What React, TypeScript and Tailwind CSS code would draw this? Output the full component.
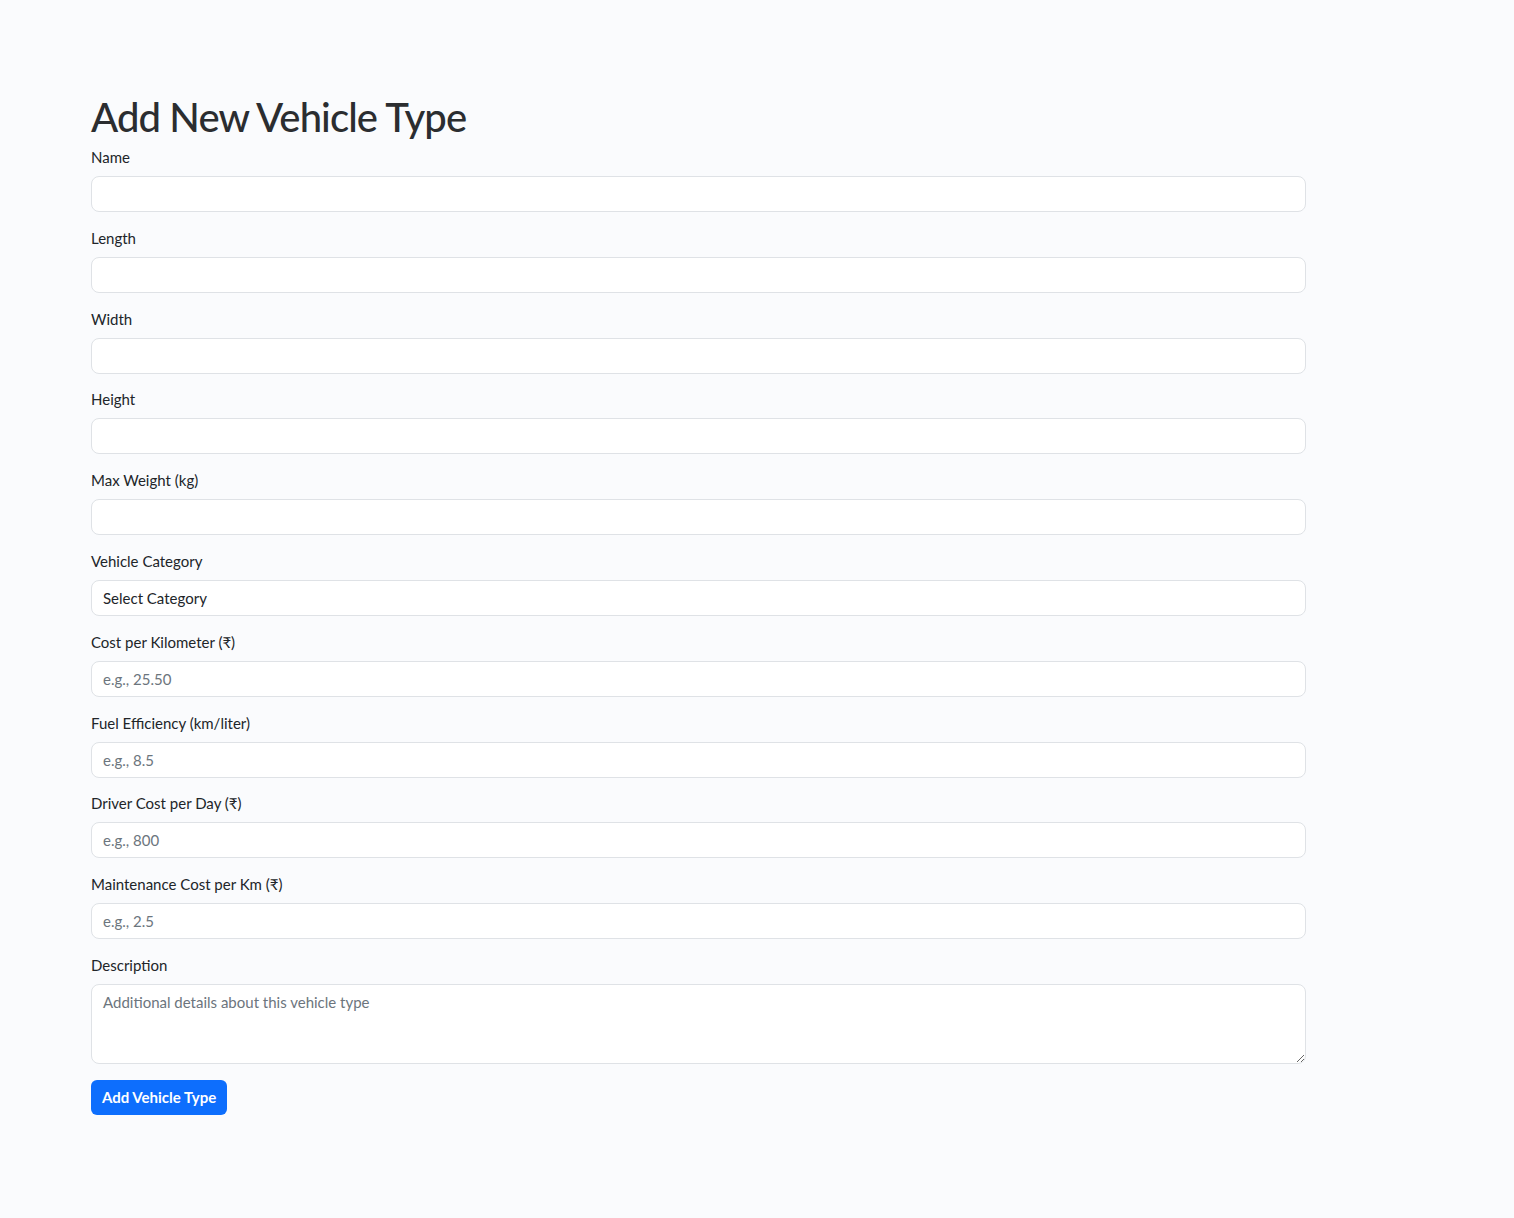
import React from 'react';

interface Field {
  label: string;
  placeholder?: string;
}

const fields: Field[] = [
  { label: 'Name' },
  { label: 'Length' },
  { label: 'Width' },
  { label: 'Height' },
  { label: 'Max Weight (kg)' },
];

const costFields: Field[] = [
  { label: 'Cost per Kilometer (₹)', placeholder: 'e.g., 25.50' },
  { label: 'Fuel Efficiency (km/liter)', placeholder: 'e.g., 8.5' },
  { label: 'Driver Cost per Day (₹)', placeholder: 'e.g., 800' },
  { label: 'Maintenance Cost per Km (₹)', placeholder: 'e.g., 2.5' },
];

const inputClass =
  'block w-full h-[36px] px-[11px] rounded-[8px] border border-[#dfe2e6] bg-white text-[15px] text-[#212529] placeholder:text-[#6c757d] outline-none';

const FormField = ({ label, placeholder }: Field) => (
  <div className="mb-[14.8px]">
    <label className="block text-[15px] leading-[22px] text-[#212529] mb-[8px]">{label}</label>
    <input type="text" placeholder={placeholder} className={inputClass} />
  </div>
);

const App = () => {
  return (
    <div className="min-h-[1218px] bg-[#fafbfd] font-['Lato','Noto_Sans',sans-serif]">
      <div className="w-[1215px] ml-[91px] pt-[93px]">
        {/* Page title */}
        <h1 className="text-[40px] leading-[48px] font-medium tracking-[-0.9px] text-[#2b2d30] mb-[5px]">
          Add New Vehicle Type
        </h1>

        <form>
          {fields.map((f, i) => (
            <FormField key={i} {...f} />
          ))}

          <div className="mb-[14.8px]">
            <label className="block text-[15px] leading-[22px] text-[#212529] mb-[8px]">Vehicle Category</label>
            <select className={inputClass + ' appearance-none'}>
              <option>Select Category</option>
            </select>
          </div>

          {costFields.map((f, i) => (
            <FormField key={i} {...f} />
          ))}

          <div className="mb-[16px]">
            <label className="block text-[15px] leading-[22px] text-[#212529] mb-[8px]">Description</label>
            <textarea
              placeholder="Additional details about this vehicle type"
              className="block w-full h-[80px] px-[11px] py-[6px] rounded-[8px] border border-[#dfe2e6] bg-white text-[15px] text-[#212529] placeholder:text-[#6c757d] outline-none"
            />
          </div>

          <button
            type="button"
            className="h-[35px] px-[11px] rounded-[6px] bg-[#0d6efd] text-white text-[15px] font-bold"
          >
            Add Vehicle Type
          </button>
        </form>
      </div>
    </div>
  );
};

export default App;
